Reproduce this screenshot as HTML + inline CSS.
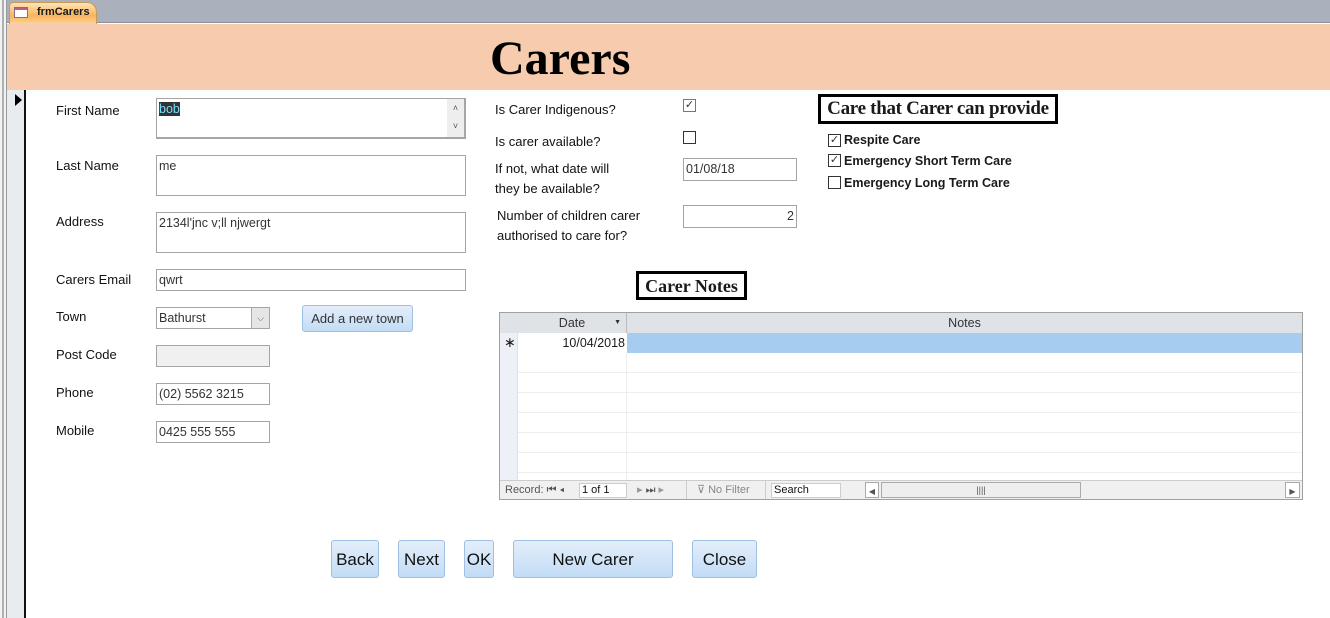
<!DOCTYPE html>
<html><head><meta charset="utf-8"><style>
*{box-sizing:border-box;margin:0;padding:0}
body{width:1330px;height:618px;overflow:hidden;background:#fff;position:relative;font-family:"Liberation Sans",sans-serif;font-size:13px;color:#1a1a1a}
.a{position:absolute}
.lbl{position:absolute;font-size:13px;color:#111}
.inp{position:absolute;border:1px solid #a5a5a5;background:#fff;font-size:12.5px;color:#333;padding:2px 2px;line-height:16px}
.btn{position:absolute;border:1px solid #9dc0e3;border-radius:3px;background:linear-gradient(#e4eefa,#c2dcf6);text-align:center;color:#111}
.cb{position:absolute;width:13px;height:13px;border:1px solid #333;background:#fff;font-size:11px;line-height:11px;text-align:center;color:#333}
.title{position:absolute;border:3px solid #000;font-family:"Liberation Serif",serif;font-weight:bold;background:#fff;white-space:nowrap;text-align:center}
</style></head><body>
<div class="a" style="left:0;top:0;width:1330px;height:23px;background:#aab1bd;border-bottom:1px solid #8a919c"></div>
<div class="a" style="left:0;top:0;width:7px;height:618px;background:#f2f2f2;border-right:1px solid #999"></div>
<div class="a" style="left:2px;top:0;width:2px;height:618px;background:#b0b0b0"></div>
<div class="a" style="left:9px;top:2px;width:88px;height:22px;background:linear-gradient(#fde4b8,#f9b45a 60%,#fbd49a);border-radius:4px 10px 0 0;border:1px solid #c89a5a;border-bottom:none"></div>
<div class="a" style="left:14px;top:7px;width:14px;height:11px;border:1px solid #8a6a8a;background:#fff"><div style="height:2px;background:#c06080"></div></div>
<div class="a" style="left:37px;top:6px;font-size:11px;font-weight:bold">frmCarers</div>
<div class="a" style="left:7px;top:24px;width:1323px;height:66px;background:#f7cbad"></div>
<div class="a" style="left:490px;top:31px;font-family:'Liberation Serif',serif;font-weight:bold;font-size:48px;color:#000">Carers</div>
<div class="a" style="left:7px;top:90px;width:19px;height:528px;background:#e8ebf0;border-right:2px solid #111"></div>
<div class="a" style="left:15px;top:94px;width:0;height:0;border-left:7px solid #000;border-top:6px solid transparent;border-bottom:6px solid transparent"></div>

<div class="lbl" style="left:56px;top:103px">First Name</div>
<div class="inp" style="left:156px;top:98px;width:310px;height:41px;border-width:1px 2px 2px 1px"><span style="background:#333;color:#7df">bob</span>
<div class="a" style="right:0;top:0;width:17px;height:38px;background:#eee;font-size:9px;color:#555;text-align:center;line-height:18px">˄<br>˅</div></div>
<div class="lbl" style="left:56px;top:158px">Last Name</div>
<div class="inp" style="left:156px;top:155px;width:310px;height:41px">me</div>
<div class="lbl" style="left:56px;top:214px">Address</div>
<div class="inp" style="left:156px;top:212px;width:310px;height:41px">2134l'jnc v;ll njwergt</div>
<div class="lbl" style="left:56px;top:272px">Carers Email</div>
<div class="inp" style="left:156px;top:269px;width:310px;height:22px">qwrt</div>
<div class="lbl" style="left:56px;top:309px">Town</div>
<div class="inp" style="left:156px;top:307px;width:114px;height:22px">Bathurst<div class="a" style="right:0;top:0;width:18px;height:20px;border-left:1px solid #aaa;background:#e6e6e6;font-size:9px;text-align:center;line-height:20px;color:#555">⌵</div></div>
<div class="btn" style="left:302px;top:305px;width:111px;height:27px;line-height:25px;font-size:13px;color:#333">Add a new town</div>
<div class="lbl" style="left:56px;top:347px">Post Code</div>
<div class="inp" style="left:156px;top:345px;width:114px;height:22px;background:#f0f0f0"></div>
<div class="lbl" style="left:56px;top:385px">Phone</div>
<div class="inp" style="left:156px;top:383px;width:114px;height:22px">(02) 5562 3215</div>
<div class="lbl" style="left:56px;top:423px">Mobile</div>
<div class="inp" style="left:156px;top:421px;width:114px;height:22px">0425 555 555</div>

<div class="lbl" style="left:495px;top:102px">Is Carer Indigenous?</div>
<div class="cb" style="left:683px;top:99px;border-color:#777">✓</div>
<div class="lbl" style="left:495px;top:134px">Is carer available?</div>
<div class="cb" style="left:683px;top:131px"></div>
<div class="lbl" style="left:495px;top:159px;line-height:20px">If not, what date will<br>they be available?</div>
<div class="inp" style="left:683px;top:158px;width:114px;height:23px">01/08/18</div>
<div class="lbl" style="left:497px;top:206px;line-height:20px">Number of children carer<br>authorised to care for?</div>
<div class="inp" style="left:683px;top:205px;width:114px;height:23px;text-align:right">2</div>

<div class="title" style="left:818px;top:94px;width:240px;height:30px;font-size:19px;line-height:24px;letter-spacing:-0.3px">Care that Carer can provide</div>
<div class="cb" style="left:828px;top:134px">✓</div><div class="a" style="left:844px;top:133px;font-weight:bold;font-size:12.5px">Respite Care</div>
<div class="cb" style="left:828px;top:154px">✓</div><div class="a" style="left:844px;top:154px;font-weight:bold;font-size:12.5px">Emergency Short Term Care</div>
<div class="cb" style="left:828px;top:176px"></div><div class="a" style="left:844px;top:176px;font-weight:bold;font-size:12.5px">Emergency Long Term Care</div>

<div class="title" style="left:636px;top:271px;width:111px;height:29px;font-size:18px;line-height:24px">Carer Notes</div>

<div class="a" style="left:499px;top:312px;width:804px;height:188px;border:1px solid #a0a0a0;background:#fff;overflow:hidden">
<div class="a" style="left:0;top:0;width:802px;height:20px;background:#dfe3e8"></div>
<div class="a" style="left:18px;top:0;width:109px;height:20px;border-right:1px solid #bbb;font-size:12.5px;line-height:20px;text-align:center;color:#333">Date<span style="position:absolute;right:5px;font-size:7px">▼</span></div>
<div class="a" style="left:127px;top:0;width:675px;height:20px;font-size:12.5px;line-height:20px;text-align:center;color:#333">Notes</div>
<div class="a" style="left:0;top:20px;width:18px;height:148px;background:#eef0f8;border-right:1px solid #e0e0e0"></div>
<div class="a" style="left:4px;top:21px;font-size:14px">∗</div>
<div class="a" style="left:18px;top:20px;width:109px;height:20px;text-align:right;padding-right:2px;line-height:21px;font-size:12.5px">10/04/2018</div>
<div class="a" style="left:127px;top:20px;width:675px;height:20px;background:#a6cdf0"></div>
<div class="a" style="left:0;top:40px;width:802px;height:128px;background:repeating-linear-gradient(#fff 0 19px,#eee 19px 20px)"></div>
<div class="a" style="left:0;top:40px;width:18px;height:128px;background:#eef0f8;border-right:1px solid #e0e0e0"></div>
<div class="a" style="left:126px;top:40px;width:1px;height:128px;background:#eee"></div>
<div class="a" style="left:0;top:167px;width:802px;height:19px;background:#f0f0f0;border-top:1px solid #ccc;font-size:11px;color:#555;line-height:18px">
<span class="a" style="left:5px">Record: ⏮ ◂</span>
<span class="a" style="left:79px;top:2px;width:48px;height:15px;background:#fff;border:1px solid #ccc;line-height:13px;color:#111;padding-left:2px">1 of 1</span>
<span class="a" style="left:137px;color:#999">▸ <span style="color:#555">⏭</span> ▸</span>
<span class="a" style="left:186px;width:80px;border-left:1px solid #ccc;border-right:1px solid #ccc;padding-left:10px;color:#888">⊽ No Filter</span>
<span class="a" style="left:271px;top:2px;width:70px;height:15px;background:#fff;border:1px solid #ccc;line-height:13px;color:#111;padding-left:2px">Search</span>
<span class="a" style="left:365px;top:1px;width:14px;height:16px;border:1px solid #aaa;background:#fff;font-size:8px;text-align:center">◀</span>
<span class="a" style="left:381px;top:1px;width:200px;height:16px;border:1px solid #aaa;background:#eee;font-size:9px;text-align:center;line-height:14px">||||</span>
<span class="a" style="left:785px;top:1px;width:15px;height:16px;border:1px solid #aaa;background:#fff;font-size:8px;text-align:center">▶</span>
</div></div>

<div class="btn" style="left:331px;top:540px;width:48px;height:38px;line-height:37px;font-size:17px">Back</div>
<div class="btn" style="left:398px;top:540px;width:47px;height:38px;line-height:37px;font-size:17px">Next</div>
<div class="btn" style="left:464px;top:540px;width:30px;height:38px;line-height:37px;font-size:17px">OK</div>
<div class="btn" style="left:513px;top:540px;width:160px;height:38px;line-height:37px;font-size:17px">New Carer</div>
<div class="btn" style="left:692px;top:540px;width:65px;height:38px;line-height:37px;font-size:17px">Close</div>
</body></html>
